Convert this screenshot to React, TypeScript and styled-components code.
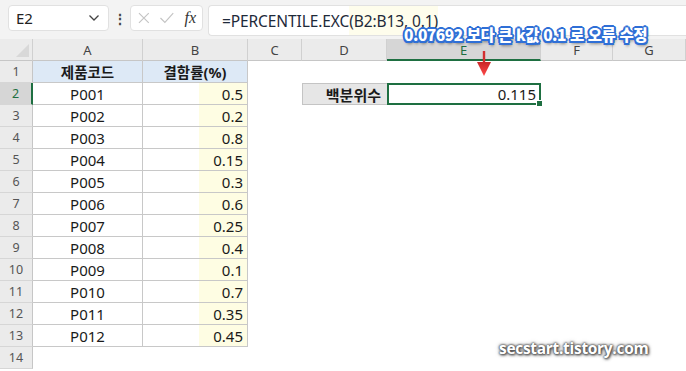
import React from "react";
import styled, { createGlobalStyle } from "styled-components";

const GlobalStyle = createGlobalStyle`
    html, body {
        margin: 0;
        padding: 0;
        background: #ffffff;
        overflow: hidden;
    }
    body {
        font-family: "Noto Sans", "Noto Sans CJK KR", sans-serif;
    }
`

const Page = styled.div`
    position: relative;
    width: 686px;
    height: 371px;
    overflow: hidden;
    background: #ffffff;
`

const Toolbar = styled.div`
    height: 39px;
    background: #f3f3f3;
    display: flex;
    align-items: flex-start;
    padding: 5px 0 0 8px;
    box-sizing: border-box;
`

const NameBox = styled.div`
    width: 101px;
    height: 26px;
    box-sizing: border-box;
    background: #fff;
    border: 1px solid #e1e1e1;
    border-radius: 4px;
    display: flex;
    align-items: center;
    justify-content: space-between;
    padding: 0 8px 0 7px;
    font-size: 15px;
    color: #222;
`

const Dots = styled.div`
    width: 21px;
    height: 26px;
    display: flex;
    align-items: center;
    justify-content: center;
    color: #444;
    font-size: 14px;
    font-weight: bold;
`

const FxBox = styled.div`
    width: 73px;
    height: 26px;
    box-sizing: border-box;
    background: #fff;
    border: 1px solid #e1e1e1;
    border-radius: 4px;
    display: flex;
    align-items: center;
    gap: 8px;
    padding: 0 6px;
`

const Fx = styled.span`
    font-family: "Liberation Serif", serif;
    font-style: italic;
    font-size: 16px;
    color: #333;
    margin-left: 2px;
`

const FormulaInput = styled.div`
    flex: 1;
    margin-left: 5px;
    height: 31px;
    box-sizing: border-box;
    background: #fff;
    border: 1px solid #e1e1e1;
    border-right: none;
    border-radius: 4px 0 0 4px;
    display: flex;
    align-items: center;
    padding-left: 13px;
    font-size: 15.5px;
    color: #1e2a3a;
    letter-spacing: -0.1px;
`

const ArgHighlight = styled.span`
    background: #fefdec;
    align-self: stretch;
    display: flex;
    align-items: center;
`

const Sheet = styled.div`
    display: grid;
    grid-template-columns: 33px 110px 105px 54px 85px 154px 72px 73px;
    grid-auto-rows: 22px;
`

const Corner = styled.div`
    background: #ebebeb;
    border-right: 1px solid #d0d0d0;
    border-bottom: 1px solid #c6c6c6;
    position: relative;
    &::after {
        content: "";
        position: absolute;
        right: 3px;
        bottom: 3px;
        border-style: solid;
        border-width: 0 0 13px 13px;
        border-color: transparent transparent #d8d8d8 transparent;
    }
`

const ColHead = styled.div<{ $active?: boolean }>`
    background: ${({ $active }) => ($active ? "#d6d6d6" : "#ebebeb")};
    border-right: 1px solid #d0d0d0;
    border-bottom: ${({ $active }) => ($active ? "2px solid #1e6f41" : "1px solid #c6c6c6")};
    color: ${({ $active }) => ($active ? "#1e6f41" : "#444")};
    font-size: 13px;
    display: flex;
    align-items: center;
    justify-content: center;
    box-sizing: border-box;
    padding-top: ${({ $active }) => ($active ? "1px" : "0")};
`

const RowHead = styled.div<{ $active?: boolean }>`
    background: ${({ $active }) => ($active ? "#d6d6d6" : "#ebebeb")};
    border-right: ${({ $active }) => ($active ? "2px solid #1e6f41" : "1px solid #c6c6c6")};
    border-bottom: 1px solid #d6d6d6;
    color: ${({ $active }) => ($active ? "#1e6f41" : "#555")};
    font-size: 12.5px;
    display: flex;
    align-items: center;
    justify-content: center;
    box-sizing: border-box;
`

const Cell = styled.div<{ $align?: string; $bg?: string; $bold?: boolean; $boxed?: boolean }>`
    box-sizing: border-box;
    display: flex;
    align-items: center;
    justify-content: ${({ $align }) => $align || "flex-start"};
    background: ${({ $bg }) => $bg || "transparent"};
    font-size: 15px;
    font-weight: ${({ $bold }) => ($bold ? 700 : 400)};
    color: #1a1a1a;
    padding: 0 4px;
    border-right: ${({ $boxed }) => ($boxed ? "1px solid #c8c8c8" : "none")};
    border-bottom: ${({ $boxed }) => ($boxed ? "1px solid #c8c8c8" : "none")};
    white-space: nowrap;
`

const HeadCell = styled(Cell)`
    font-weight: 700;
    font-size: 14.5px;
`

const RateCell = styled(Cell)`
    background: linear-gradient(to right, #ffffff 0, #ffffff 56px, #fefde3 56px);
`

const LabelCell = styled(Cell)`
    background: #e6e6e6;
    border: 1px solid #c4c4c4;
    border-right: none;
    font-weight: 700;
    padding-right: 6px;
`

const ActiveCell = styled(Cell)`
    border: 2px solid #1e6f41;
    position: relative;
    padding-right: 3px;
    &::after {
        content: "";
        position: absolute;
        right: -4px;
        bottom: -4px;
        width: 5px;
        height: 5px;
        background: #1e6f41;
        border: 1px solid #fff;
    }
`

const Callout = styled.div`
    position: absolute;
    left: 404px;
    top: 23px;
    font-family: "Noto Sans CJK KR", "Noto Sans", sans-serif;
    font-weight: 900;
    font-size: 15.5px;
    letter-spacing: -0.5px;
    word-spacing: 1px;
    color: #ffffff;
    white-space: nowrap;
    text-shadow:
        -1.5px -1.5px 0 #2f6fd6, 1.5px -1.5px 0 #2f6fd6,
        -1.5px 1.5px 0 #2f6fd6, 1.5px 1.5px 0 #2f6fd6,
        0 2px 0 #2f6fd6, 0 -2px 0 #2f6fd6,
        2px 0 0 #2f6fd6, -2px 0 0 #2f6fd6,
        1px 3px 3px rgba(0, 0, 0, 0.45);
`

const Arrow = styled.svg`
    position: absolute;
    left: 476px;
    top: 51px;
`

const Watermark = styled.div`
    position: absolute;
    left: 499px;
    top: 337px;
    font-family: "Open Sans", "Noto Sans", sans-serif;
    font-weight: 700;
    font-size: 15.5px;
    color: #ffffff;
    letter-spacing: -0.3px;
    text-shadow:
        0 0 2px #555, 0 0 2px #555, 1px 1px 3px #333, 0 0 4px rgba(0,0,0,0.5);
`

const columns = ["A", "B", "C", "D", "E", "F", "G"]

const rows = [
    ["P001", "0.5"],
    ["P002", "0.2"],
    ["P003", "0.8"],
    ["P004", "0.15"],
    ["P005", "0.3"],
    ["P006", "0.6"],
    ["P007", "0.25"],
    ["P008", "0.4"],
    ["P009", "0.1"],
    ["P010", "0.7"],
    ["P011", "0.35"],
    ["P012", "0.45"],
]

function Chevron() {
    return (
        <svg width="12" height="8" viewBox="0 0 12 8">
            <path d="M1.5 1.5 L6 6 L10.5 1.5" fill="none" stroke="#444" strokeWidth="1.3" />
        </svg>
    )
}

export default function App() {
    return (
        <Page>
            <GlobalStyle />
            <Toolbar>
                <NameBox>
                    <span>E2</span>
                    <Chevron />
                </NameBox>
                <Dots>⋮</Dots>
                <FxBox>
                    <svg width="14" height="14" viewBox="0 0 14 14">
                        <path d="M2 2 L12 12 M12 2 L2 12" stroke="#c4c4c4" strokeWidth="1.2" />
                    </svg>
                    <svg width="16" height="14" viewBox="0 0 16 14">
                        <path d="M1.5 7 L6 11.5 L14.5 2" fill="none" stroke="#c4c4c4" strokeWidth="1.2" />
                    </svg>
                    <Fx>fx</Fx>
                </FxBox>
                <FormulaInput>
                    <span>=PERCENTILE.EXC</span>
                    <ArgHighlight>(B2:B13, 0.1)</ArgHighlight>
                </FormulaInput>
            </Toolbar>
            <Sheet>
                <Corner />
                {columns.map((c) => (
                    <ColHead key={c} $active={c === "E"}>{c}</ColHead>
                ))}

                <RowHead>1</RowHead>
                <HeadCell $align="center" $bg="#dde9f6" $boxed>제품코드</HeadCell>
                <HeadCell $align="center" $bg="#dde9f6" $boxed>결함률(%)</HeadCell>
                <Cell /><Cell /><Cell /><Cell /><Cell />

                {rows.map(([code, rate], i) => (
                    <React.Fragment key={code}>
                        <RowHead $active={i === 0}>{i + 2}</RowHead>
                        <Cell $align="center" $boxed>{code}</Cell>
                        <RateCell $align="flex-end" $boxed>{rate}</RateCell>
                        <Cell />
                        {i === 0 ? (
                            <>
                                <LabelCell $align="flex-end">백분위수</LabelCell>
                                <ActiveCell $align="flex-end">0.115</ActiveCell>
                            </>
                        ) : (
                            <>
                                <Cell />
                                <Cell />
                            </>
                        )}
                        <Cell /><Cell />
                    </React.Fragment>
                ))}

                <RowHead>14</RowHead>
                <Cell /><Cell /><Cell /><Cell /><Cell /><Cell /><Cell />
            </Sheet>

            <Arrow width="16" height="26" viewBox="0 0 16 26">
                <defs>
                    <linearGradient id="ar" x1="0" y1="0" x2="0" y2="1">
                        <stop offset="0" stopColor="#c82828" />
                        <stop offset="1" stopColor="#ff4a4a" />
                    </linearGradient>
                </defs>
                <rect x="6.8" y="0" width="2.4" height="13" fill="#d32f2f" />
                <path d="M1 11 L15 11 L8 25 Z" fill="url(#ar)" />
            </Arrow>
            <Callout>0.07692 보다 큰 k값 0.1 로 오류 수정</Callout>
            <Watermark>secstart.tistory.com</Watermark>
        </Page>
    )
}
